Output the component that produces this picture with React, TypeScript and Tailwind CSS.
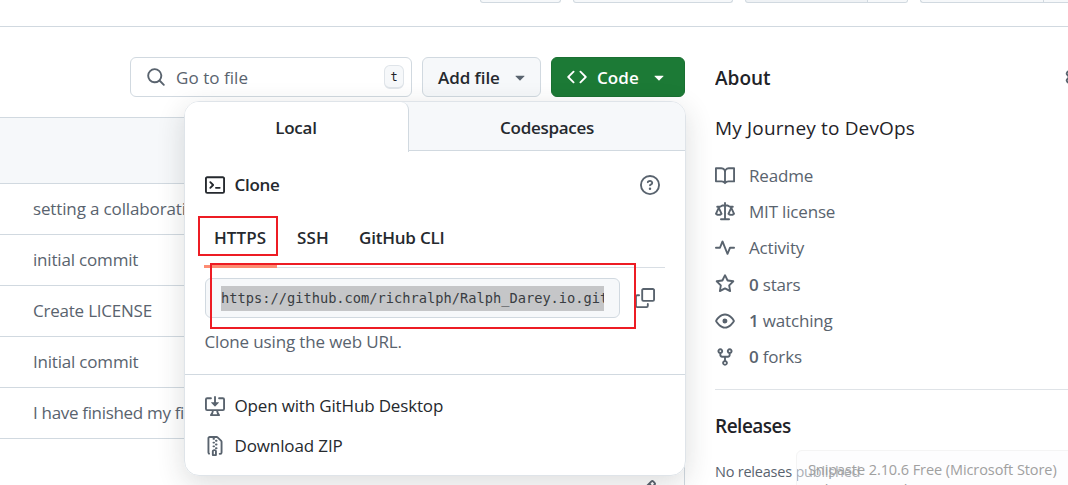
import type { ReactNode } from "react";

const ICONS = {
  search: "M10.68 11.74a6 6 0 0 1-7.922-8.982 6 6 0 0 1 8.982 7.922l3.04 3.04a.749.749 0 0 1-.326 1.275.749.749 0 0 1-.734-.215ZM11.5 7a4.499 4.499 0 1 0-8.997 0A4.499 4.499 0 0 0 11.5 7Z",
  code: "m11.28 3.22 4.25 4.25a.75.75 0 0 1 0 1.06l-4.25 4.25a.749.749 0 0 1-1.275-.326.749.749 0 0 1 .215-.734L13.94 8l-3.72-3.72a.749.749 0 0 1 .326-1.275.749.749 0 0 1 .734.215Zm-6.56 0a.751.751 0 0 1 1.042.018.751.751 0 0 1 .018 1.042L2.06 8l3.72 3.72a.749.749 0 0 1-.326 1.275.749.749 0 0 1-.734-.215L.47 8.53a.75.75 0 0 1 0-1.06Z",
  caret: "m4.427 7.427 3.396 3.396a.25.25 0 0 0 .354 0l3.396-3.396A.25.25 0 0 0 11.396 7H4.604a.25.25 0 0 0-.177.427Z",
  terminal: "M0 2.75C0 1.784.784 1 1.75 1h12.5c.966 0 1.75.784 1.75 1.75v10.5A1.75 1.75 0 0 1 14.25 15H1.75A1.75 1.75 0 0 1 0 13.25Zm1.75-.25a.25.25 0 0 0-.25.25v10.5c0 .138.112.25.25.25h12.5a.25.25 0 0 0 .25-.25V2.75a.25.25 0 0 0-.25-.25ZM7.25 8a.749.749 0 0 1-.22.53l-2.25 2.25a.749.749 0 0 1-1.275-.326.749.749 0 0 1 .215-.734L5.44 8 3.72 6.28a.749.749 0 0 1 .326-1.275.749.749 0 0 1 .734.215l2.25 2.25c.141.14.22.331.22.53Zm1.5 1.5h3a.75.75 0 0 1 0 1.5h-3a.75.75 0 0 1 0-1.5Z",
  question: "M0 8a8 8 0 1 1 16 0A8 8 0 0 1 0 8Zm8-6.5a6.5 6.5 0 1 0 0 13 6.5 6.5 0 0 0 0-13ZM6.92 6.085h.001a.749.749 0 1 1-1.342-.67c.169-.339.436-.701.849-.977C6.845 4.16 7.369 4 8 4a2.756 2.756 0 0 1 1.637.525c.503.377.863.965.863 1.725 0 .448-.115.83-.329 1.15-.205.307-.47.513-.692.662-.109.072-.22.138-.313.195l-.006.004a6.24 6.24 0 0 0-.26.16.952.952 0 0 0-.276.245.75.75 0 0 1-1.248-.832c.184-.264.42-.489.692-.661.103-.067.207-.132.313-.195l.007-.004c.1-.061.182-.11.258-.161a.969.969 0 0 0 .277-.245C8.96 6.514 9 6.427 9 6.25a.612.612 0 0 0-.262-.525A1.27 1.27 0 0 0 8 5.5c-.369 0-.595.09-.74.187a1.01 1.01 0 0 0-.34.398ZM9 11a1 1 0 1 1-2 0 1 1 0 0 1 2 0Z",
  copy: "M0 6.75C0 5.784.784 5 1.75 5h1.5a.75.75 0 0 1 0 1.5h-1.5a.25.25 0 0 0-.25.25v7.5c0 .138.112.25.25.25h7.5a.25.25 0 0 0 .25-.25v-1.5a.75.75 0 0 1 1.5 0v1.5A1.75 1.75 0 0 1 9.25 16h-7.5A1.75 1.75 0 0 1 0 14.25ZM5 1.75C5 .784 5.784 0 6.75 0h7.5C15.216 0 16 .784 16 1.75v7.5A1.75 1.75 0 0 1 14.25 11h-7.5A1.75 1.75 0 0 1 5 9.25Zm1.75-.25a.25.25 0 0 0-.25.25v7.5c0 .138.112.25.25.25h7.5a.25.25 0 0 0 .25-.25v-7.5a.25.25 0 0 0-.25-.25Z",
  desktop: "m4.927 5.427 2.896 2.896a.25.25 0 0 0 .354 0l2.896-2.896A.25.25 0 0 0 10.896 5H8.75V.75a.75.75 0 1 0-1.5 0V5H5.104a.25.25 0 0 0-.177.427ZM1.573 2.573a.25.25 0 0 0-.073.177v7.5a.25.25 0 0 0 .25.25h12.5a.25.25 0 0 0 .25-.25v-7.5a.25.25 0 0 0-.25-.25h-3a.75.75 0 1 1 0-1.5h3A1.75 1.75 0 0 1 16 2.75v7.5A1.75 1.75 0 0 1 14.25 12h-3.727c.099 1.041.52 1.872 1.292 2.757A.75.75 0 0 1 11.25 16h-6.5a.75.75 0 0 1-.565-1.243c.772-.885 1.192-1.716 1.292-2.757H1.75A1.75 1.75 0 0 1 0 10.25v-7.5A1.75 1.75 0 0 1 1.75 1h3a.75.75 0 0 1 0 1.5h-3a.25.25 0 0 0-.177.073ZM6.982 12a5.72 5.72 0 0 1-.765 2.5h3.566a5.72 5.72 0 0 1-.765-2.5H6.982Z",
  zip: "M3.5 1.75v11.5c0 .09.048.173.126.217a.75.75 0 0 1-.752 1.298A1.748 1.748 0 0 1 2 13.25V1.75C2 .784 2.784 0 3.75 0h5.586c.464 0 .909.185 1.237.513l2.914 2.914c.329.328.513.773.513 1.237v8.586A1.75 1.75 0 0 1 12.25 15h-.5a.75.75 0 0 1 0-1.5h.5a.25.25 0 0 0 .25-.25V4.664a.25.25 0 0 0-.073-.177L9.513 1.573a.25.25 0 0 0-.177-.073H7.25a.75.75 0 0 1 0 1.5h-.5a.75.75 0 0 1 0-1.5h-3a.25.25 0 0 0-.25.25Zm3.75 8.75h.5c.966 0 1.75.784 1.75 1.75v3a.75.75 0 0 1-.75.75h-2.5a.75.75 0 0 1-.75-.75v-3c0-.966.784-1.75 1.75-1.75ZM6 5.25a.75.75 0 0 1 .75-.75h.5a.75.75 0 0 1 0 1.5h-.5A.75.75 0 0 1 6 5.25Zm.75 2.25h.5a.75.75 0 0 1 0 1.5h-.5a.75.75 0 0 1 0-1.5ZM8 6.75A.75.75 0 0 1 8.75 6h.5a.75.75 0 0 1 0 1.5h-.5A.75.75 0 0 1 8 6.75ZM8.75 3h.5a.75.75 0 0 1 0 1.5h-.5a.75.75 0 0 1 0-1.5ZM8 9.75A.75.75 0 0 1 8.75 9h.5a.75.75 0 0 1 0 1.5h-.5A.75.75 0 0 1 8 9.75Zm-1 2.5v2.25h1v-2.25a.25.25 0 0 0-.25-.25h-.5a.25.25 0 0 0-.25.25Z",
  book: "M0 1.75A.75.75 0 0 1 .75 1h4.253c1.227 0 2.317.59 3 1.501A3.743 3.743 0 0 1 11.006 1h4.245a.75.75 0 0 1 .75.75v10.5a.75.75 0 0 1-.75.75h-4.507a2.25 2.25 0 0 0-1.591.659l-.622.621a.75.75 0 0 1-1.06 0l-.622-.621A2.25 2.25 0 0 0 5.258 13H.75a.75.75 0 0 1-.75-.75Zm7.251 10.324.004-5.073-.002-2.253A2.25 2.25 0 0 0 5.003 2.5H1.5v9h3.757a3.75 3.75 0 0 1 1.994.574ZM8.755 4.75l-.004 7.322a3.752 3.752 0 0 1 1.992-.572H14.5v-9h-3.495a2.25 2.25 0 0 0-2.25 2.25Z",
  law: "M8.75.75V2h.985c.304 0 .603.08.867.231l1.29.736c.038.022.08.033.124.033h2.234a.75.75 0 0 1 0 1.5h-.427l2.111 4.692a.75.75 0 0 1-.154.838l-.53-.53.529.531-.001.002-.002.002-.006.006-.006.005-.01.01-.045.04c-.21.176-.441.327-.686.45C14.556 10.78 13.88 11 13 11a4.498 4.498 0 0 1-2.023-.454 3.544 3.544 0 0 1-.686-.45l-.045-.04-.016-.015-.006-.006-.004-.004v-.001a.75.75 0 0 1-.154-.838L12.178 4.5h-.162c-.305 0-.604-.079-.868-.231l-1.29-.736a.245.245 0 0 0-.124-.033H8.75V13h2.5a.75.75 0 0 1 0 1.5h-6.5a.75.75 0 0 1 0-1.5h2.5V3.5h-.984a.245.245 0 0 0-.124.033l-1.289.737c-.265.15-.564.23-.869.23h-.162l2.112 4.692a.75.75 0 0 1-.154.838l-.53-.53.529.531-.001.002-.002.002-.006.006-.016.015-.045.04c-.21.176-.441.327-.686.45C4.556 10.78 3.88 11 3 11a4.498 4.498 0 0 1-2.023-.454 3.544 3.544 0 0 1-.686-.45l-.045-.04-.016-.015-.006-.006-.004-.004v-.001a.75.75 0 0 1-.154-.838L2.178 4.5H1.75a.75.75 0 0 1 0-1.5h2.234a.249.249 0 0 0 .125-.033l1.288-.737c.265-.15.564-.23.869-.23h.984V.75a.75.75 0 0 1 1.5 0Zm2.945 8.477c.285.135.718.273 1.305.273s1.02-.138 1.305-.273L13 6.327Zm-10 0c.285.135.718.273 1.305.273s1.02-.138 1.305-.273L3 6.327Z",
  pulse: "M6 2c.306 0 .582.187.696.471L10 10.731l1.304-3.26A.751.751 0 0 1 12 7h3.25a.75.75 0 0 1 0 1.5h-2.742l-1.812 4.528a.751.751 0 0 1-1.392 0L6 4.77 4.696 8.03A.75.75 0 0 1 4 8.5H.75a.75.75 0 0 1 0-1.5h2.742l1.812-4.529A.751.751 0 0 1 6 2Z",
  star: "M8 .25a.75.75 0 0 1 .673.418l1.882 3.815 4.21.612a.75.75 0 0 1 .416 1.279l-3.046 2.97.719 4.192a.751.751 0 0 1-1.088.791L8 12.347l-3.766 1.98a.75.75 0 0 1-1.088-.79l.72-4.194L.818 6.374a.75.75 0 0 1 .416-1.28l4.21-.611L7.327.668A.75.75 0 0 1 8 .25Zm0 2.445L6.615 5.5a.75.75 0 0 1-.564.41l-3.097.45 2.24 2.184a.75.75 0 0 1 .216.664l-.528 3.084 2.769-1.456a.75.75 0 0 1 .698 0l2.77 1.456-.53-3.084a.75.75 0 0 1 .216-.664l2.24-2.183-3.096-.45a.75.75 0 0 1-.564-.41L8 2.694Z",
  eye: "M8 2c1.981 0 3.671.992 4.933 2.078 1.27 1.091 2.187 2.345 2.637 3.023a1.62 1.62 0 0 1 0 1.798c-.45.678-1.367 1.932-2.637 3.023C11.67 13.008 9.981 14 8 14c-1.981 0-3.671-.992-4.933-2.078C1.797 10.83.88 9.576.43 8.898a1.62 1.62 0 0 1 0-1.798c.45-.677 1.367-1.931 2.637-3.022C4.33 2.992 6.019 2 8 2ZM1.679 7.932a.12.12 0 0 0 0 .136c.411.622 1.241 1.75 2.366 2.717C5.176 11.758 6.527 12.5 8 12.5c1.473 0 2.825-.742 3.955-1.715 1.124-.967 1.954-2.096 2.366-2.717a.12.12 0 0 0 0-.136c-.412-.621-1.242-1.75-2.366-2.717C10.824 4.242 9.473 3.5 8 3.5c-1.473 0-2.825.742-3.955 1.715-1.124.967-1.954 2.096-2.366 2.717ZM8 10a2 2 0 1 1-.001-3.999A2 2 0 0 1 8 10Z",
  fork: "M5 5.372v.878c0 .414.336.75.75.75h4.5a.75.75 0 0 0 .75-.75v-.878a2.25 2.25 0 1 1 1.5 0v.878a2.25 2.25 0 0 1-2.25 2.25h-1.5v2.128a2.251 2.251 0 1 1-1.5 0V8.5h-1.5A2.25 2.25 0 0 1 3.5 6.25v-.878a2.25 2.25 0 1 1 1.5 0ZM5 3.25a.75.75 0 1 0-1.5 0 .75.75 0 0 0 1.5 0Zm6.75.75a.75.75 0 1 0 0-1.5.75.75 0 0 0 0 1.5Zm-3 8.75a.75.75 0 1 0-1.5 0 .75.75 0 0 0 1.5 0Z",
  pencil: "M11.013 1.427a1.75 1.75 0 0 1 2.474 0l1.086 1.086a1.75 1.75 0 0 1 0 2.474l-8.61 8.61c-.21.21-.47.364-.756.445l-3.251.93a.75.75 0 0 1-.927-.928l.929-3.25c.081-.286.235-.547.445-.758l8.61-8.61Zm.176 4.823L9.75 4.81l-6.286 6.287a.253.253 0 0 0-.064.108l-.558 1.953 1.953-.558a.253.253 0 0 0 .108-.064Zm1.238-3.763a.25.25 0 0 0-.354 0L10.811 3.75l1.439 1.44 1.263-1.263a.25.25 0 0 0 0-.354Z",
  gear: "M8 0a8.2 8.2 0 0 1 .701.031C9.444.095 9.99.645 10.16 1.29l.288 1.107c.018.066.079.158.212.224.231.114.454.243.668.386.123.082.233.09.299.071l1.103-.303c.644-.176 1.392.021 1.82.63.27.385.506.792.704 1.218.315.675.111 1.422-.364 1.891l-.814.806c-.049.048-.098.147-.088.294.016.257.016.515 0 .772-.01.147.038.246.088.294l.814.806c.475.469.679 1.216.364 1.891a7.977 7.977 0 0 1-.704 1.217c-.428.61-1.176.807-1.82.63l-1.102-.302c-.067-.019-.177-.011-.3.071a5.909 5.909 0 0 1-.668.386c-.133.066-.194.158-.211.224l-.29 1.106c-.168.646-.715 1.196-1.458 1.26a8.006 8.006 0 0 1-1.402 0c-.743-.064-1.289-.614-1.458-1.26l-.289-1.106c-.018-.066-.079-.158-.212-.224a5.738 5.738 0 0 1-.668-.386c-.123-.082-.233-.09-.299-.071l-1.103.303c-.644.176-1.392-.021-1.82-.63a8.12 8.12 0 0 1-.704-1.218c-.315-.675-.111-1.422.363-1.891l.815-.806c.05-.048.098-.147.088-.294a6.214 6.214 0 0 1 0-.772c.01-.147-.038-.246-.088-.294l-.815-.806C.635 6.045.431 5.298.746 4.623a7.92 7.92 0 0 1 .704-1.217c.428-.61 1.176-.807 1.82-.63l1.102.302c.067.019.177.011.3-.071.214-.143.437-.272.668-.386.133-.066.194-.158.211-.224l.29-1.106C6.009.645 6.556.095 7.299.03 7.53.01 7.764 0 8 0Zm-.571 1.525c-.036.003-.108.036-.137.146l-.289 1.105c-.147.561-.549.967-.998 1.189-.173.086-.34.183-.5.29-.417.278-.97.423-1.529.27l-1.103-.303c-.109-.03-.175.016-.195.045-.22.312-.412.644-.573.99-.014.031-.021.11.059.19l.815.806c.411.406.562.957.53 1.456a4.709 4.709 0 0 0 0 .582c.032.499-.119 1.05-.53 1.456l-.815.806c-.081.08-.073.159-.059.19.162.346.353.677.573.989.02.03.085.076.195.046l1.102-.303c.56-.153 1.113-.008 1.53.27.161.107.328.204.501.29.447.222.85.629.997 1.189l.289 1.105c.029.109.101.143.137.146a6.6 6.6 0 0 0 1.142 0c.036-.003.108-.036.137-.146l.289-1.105c.147-.561.549-.967.998-1.189.173-.086.34-.183.5-.29.417-.278.97-.423 1.529-.27l1.103.303c.109.029.175-.016.195-.045.22-.313.411-.644.573-.99.014-.031.021-.11-.059-.19l-.815-.806c-.411-.406-.562-.957-.53-1.456a4.709 4.709 0 0 0 0-.582c-.032-.499.119-1.05.53-1.456l.815-.806c.081-.08.073-.159.059-.19a6.464 6.464 0 0 0-.573-.989c-.02-.03-.085-.076-.195-.046l-1.102.303c-.56.153-1.113.008-1.53-.27a4.44 4.44 0 0 0-.501-.29c-.447-.222-.85-.629-.997-1.189l-.289-1.105c-.029-.11-.101-.143-.137-.146a6.6 6.6 0 0 0-1.142 0ZM11 8a3 3 0 1 1-6 0 3 3 0 0 1 6 0ZM9.5 8a1.5 1.5 0 1 0-3.001.001A1.5 1.5 0 0 0 9.5 8Z",
};

function Icon({ name, className = "" }: { name: keyof typeof ICONS; className?: string }) {
  return (
    <svg viewBox="0 0 16 16" className={`size-5 shrink-0 fill-current ${className}`}>
      <path d={ICONS[name]} />
    </svg>
  );
}

const COMMITS: [string, string][] = [
  ["setting a collaboration", "tracking-[-0.14px]"],
  ["initial commit", "tracking-[-0.18px]"],
  ["Create LICENSE", "tracking-[-0.22px]"],
  ["Initial commit", "tracking-[-0.2px]"],
  ["I have finished my first", "tracking-[-0.32px]"],
];

function TopBar() {
  return (
    <div className="flex h-[27px] items-start border-b border-[#d1d9e0] pl-[480px]">
      <div className="h-[3px] w-[81px] rounded-b-md border border-t-0 border-[#d1d9e0] bg-[#f6f8fa]" />
      <div className="ml-3 h-[3px] w-[160px] rounded-b-md border border-t-0 border-[#d1d9e0] bg-[#f6f8fa]" />
      <div className="ml-3 flex h-[3px] w-[163px] rounded-b-md border border-t-0 border-[#d1d9e0] bg-[#eff2f5]">
        <div className="w-[122px] border-r border-[#d1d9e0]" />
        <div className="flex-1 rounded-br-md bg-[#f6f8fa]" />
      </div>
      <div className="ml-3 flex h-[3px] flex-1 rounded-bl-md border border-t-0 border-r-0 border-[#d1d9e0] bg-[#f6f8fa]">
        <div className="w-[123px] border-r border-[#d1d9e0]" />
      </div>
    </div>
  );
}

function Toolbar() {
  return (
    <div className="flex h-10 gap-2.5 pl-[130px] text-[17px]">
      <div className="flex w-[282px] items-center rounded-md border border-[#d1d9e0] pr-[7px] pl-[15px] text-[#59636e]">
        <Icon name="search" />
        <span className="ml-2.5 flex-1 pt-px tracking-[0.05px]">Go to file</span>
        <kbd className="flex h-6 w-5 items-center justify-center rounded-md border border-b-2 border-[#dfe4e9] bg-[#f6f8fa] font-[DejaVu_Sans_Mono,monospace] text-[12px] text-[#1f2328]">t</kbd>
      </div>
      <button className="flex w-[119px] items-center rounded-md border border-[#d1d9e0] bg-[#f6f8fa] pl-[15px] font-semibold text-[#25292e]">
        <span className="w-[73px] pt-px text-left tracking-[-0.05px] whitespace-nowrap">Add file</span>
        <Icon name="caret" className="-ml-px text-[#59636e]" />
      </button>
      <button className="flex w-[134px] items-center rounded-md border border-[#1a7032] bg-[#1c7a36] pl-[15px] font-semibold text-white">
        <Icon name="code" />
        <span className="ml-2.5 w-[52px] pt-px text-left tracking-[0.1px]">Code</span>
        <Icon name="caret" />
      </button>
    </div>
  );
}

function FileTable() {
  return (
    <div className="mt-5 w-[685px] border-t border-r border-[#d1d9e0]">
      <div className="h-[66px] border-b border-[#d1d9e0] bg-[#f6f8fa]" />
      {COMMITS.map(([text, tracking]) => (
        <div key={text} className="flex h-[51px] items-center border-b border-[#d1d9e0] pl-[33px] text-[17px] text-[#59636e]">
          <span className={`whitespace-nowrap ${tracking}`}>{text}</span>
        </div>
      ))}
      <div className="flex h-[46px] justify-end pt-[40px] pr-[27px] text-[#59636e]">
        <Icon name="pencil" />
      </div>
    </div>
  );
}

function Stat({ icon, children }: { icon: keyof typeof ICONS; children: ReactNode }) {
  return (
    <li className="flex h-[36.25px] items-center gap-[14px] text-[17px] tracking-[-0.18px] text-[#59636e]">
      <Icon name={icon} />
      <span>{children}</span>
    </li>
  );
}

function Sidebar() {
  return (
    <aside className="ml-[30px] flex-1 overflow-hidden pt-[6px] whitespace-nowrap text-[#1f2328]">
      <div className="flex items-center">
        <h2 className="w-[350px] shrink-0 text-[19px] leading-[30px] font-semibold">About</h2>
        <Icon name="gear" className="-mt-0.5 text-[#59636e]" />
      </div>
      <p className="mt-5 text-[19px] leading-[30px] tracking-[0.16px]">My Journey to DevOps</p>
      <ul className="mt-[14.5px]">
        <Stat icon="book">Readme</Stat>
        <Stat icon="law">MIT license</Stat>
        <Stat icon="pulse">Activity</Stat>
        <Stat icon="star"><b className="font-semibold">0</b> stars</Stat>
        <Stat icon="eye"><b className="font-semibold">1</b> watching</Stat>
        <Stat icon="fork"><b className="font-semibold">0</b> forks</Stat>
      </ul>
      <hr className="mt-[13.5px] border-[#dfe3e7]" />
      <h2 className="mt-[21px] text-[19px] leading-[30px] font-semibold tracking-[-0.5px]">Releases</h2>
      <p className="mt-5 text-[14.5px] leading-[22px] tracking-[-0.22px] text-[#59636e]">No releases published</p>
    </aside>
  );
}

function CloneMenu() {
  return (
    <div className="absolute top-[101px] left-[184px] flex h-[375px] w-[502px] flex-col overflow-hidden rounded-[15px] border border-[#dfe4e9] bg-white text-[17px] text-[#25292e]">
      <div className="flex h-[49px] shrink-0 bg-[#f6f8fa] font-semibold">
        <div className="flex h-[50px] w-[224px] items-center justify-center rounded-tr-[8px] border-r border-[#d1d9e0] bg-white pt-px pr-px tracking-[-0.2px]">Local</div>
        <div className="flex flex-1 items-center justify-center border-b border-[#d1d9e0] pt-[3px] tracking-[-0.3px]">Codespaces</div>
      </div>
      <div className="h-[224px] shrink-0 border-b border-[#d1d9e0] px-5 pt-[22px]">
        <div className="flex h-6 items-center">
          <Icon name="terminal" />
          <span className="ml-[9.5px] flex-1 font-semibold tracking-[-0.3px]">Clone</span>
          <Icon name="question" className="mr-[5px] text-[#59636e]" />
        </div>
        <div className="mt-[18px] -ml-px flex h-[53px] border-b border-[#d8dee4] font-semibold">
          <div className="flex h-[53px] w-[73px] shrink-0 items-start border-b-[3px] border-[#fd8c73] pt-[11px] pl-[10px] leading-6 tracking-[0.1px]">HTTPS</div>
          <div className="w-[62px] pt-[11px] pl-5 leading-6 tracking-[0.1px]">SSH</div>
          <div className="pt-[11px] pl-5 leading-6 tracking-[-0.2px] whitespace-nowrap">GitHub CLI</div>
        </div>
        <div className="mt-2.5 flex items-center">
          <div className="flex h-10 w-[415px] items-center rounded-md border border-[#d1d9e0] bg-[#f6f8fa] pl-[15px]">
            <span className="h-[25px] w-[383px] overflow-hidden bg-[#c5c6c8] font-[DejaVu_Sans_Mono,monospace] text-[13.7px] leading-[24px] whitespace-nowrap text-[#393d42]">https://github.com/richralph/Ralph_Darey.io.git</span>
          </div>
          <Icon name="copy" className="ml-[15px] text-[#59636e]" />
        </div>
        <p className="mt-3 -ml-[0.5px] leading-6 tracking-[-0.14px] text-[#59636e]">Clone using the web URL.</p>
      </div>
      <div className="flex flex-col px-5 pt-[11px]">
        <div className="flex h-10 items-center gap-[9.5px]"><Icon name="desktop" className="text-[#59636e]" /><span className="tracking-[-0.16px]">Open with GitHub Desktop</span></div>
        <div className="flex h-10 items-center gap-[9.5px]"><Icon name="zip" className="text-[#59636e]" /><span className="tracking-[-0.12px]">Download ZIP</span></div>
      </div>
    </div>
  );
}

export default function App() {
  return (
    <div className="relative h-[485px] w-[1068px] overflow-hidden bg-white font-[Open_Sans,Noto_Sans,sans-serif]">
      <TopBar />
      <div className="mt-[30px] flex">
        <main className="w-[685px]">
          <Toolbar />
          <FileTable />
        </main>
        <Sidebar />
      </div>
      <div className="absolute top-[101px] left-[184px] h-[375px] w-[502px] rounded-[15px] shadow-[0_8px_28px_0_rgba(37,41,46,0.16)]" />
      <CloneMenu />
      <div className="absolute top-[216px] left-[198px] h-10 w-20 border-2 border-[#ed1c24]" />
      <div className="absolute top-[263px] left-[210px] h-[66px] w-[426px] border-2 border-[#ed1c24]" />
      <div className="absolute top-[450px] left-[796px] h-16 w-[290px] rounded-md border border-[#f4f4f4] bg-[#fcfcfd]/50 pt-[9px] pl-[11px] text-[14.5px] leading-[20px] tracking-[-0.08px] whitespace-nowrap text-[#a0a0a0]">
        <p>Snipaste 2.10.6 Free (Microsoft Store)</p>
        <p>Subscription Plan</p>
      </div>
    </div>
  );
}
